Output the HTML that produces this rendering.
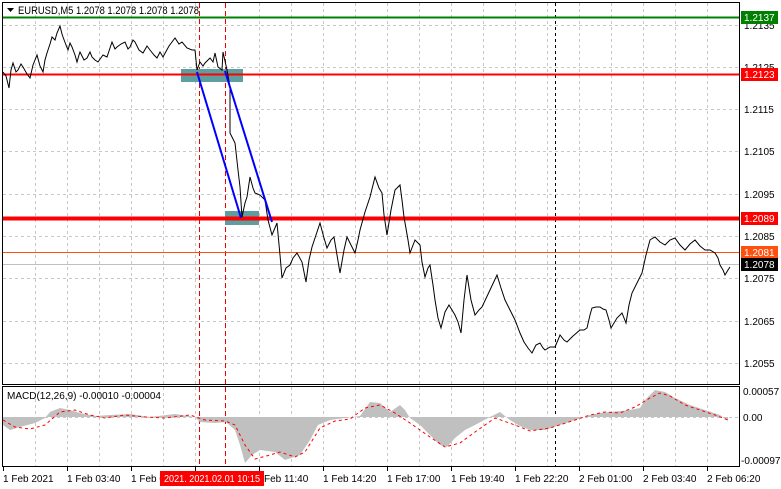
<!DOCTYPE html>
<html><head><meta charset="utf-8"><style>
body{margin:0;background:#fff;width:781px;height:489px;overflow:hidden}
svg{display:block;font-family:"Liberation Sans",sans-serif}
</style></head><body>
<svg width="781" height="489" viewBox="0 0 781 489" xmlns="http://www.w3.org/2000/svg">
<rect width="781" height="489" fill="#fff"/>
<g stroke="#c8c8c8" stroke-dasharray="3,3" stroke-width="1">
<path d="M35.5 3V384M67.5 3V384M99.5 3V384M131.5 3V384M163.5 3V384M195.5 3V384M259.5 3V384M291.5 3V384M323.5 3V384M355.5 3V384M387.5 3V384M419.5 3V384M451.5 3V384M483.5 3V384M515.5 3V384M547.5 3V384M579.5 3V384M611.5 3V384M643.5 3V384M675.5 3V384M707.5 3V384"/>
<path d="M35.5 387V466M67.5 387V466M99.5 387V466M131.5 387V466M163.5 387V466M195.5 387V466M259.5 387V466M291.5 387V466M323.5 387V466M355.5 387V466M387.5 387V466M419.5 387V466M451.5 387V466M483.5 387V466M515.5 387V466M547.5 387V466M579.5 387V466M611.5 387V466M643.5 387V466M675.5 387V466M707.5 387V466"/>
<path d="M3 25.5H740M3 67.5H740M3 109.5H740M3 151.5H740M3 194.5H740M3 236.5H740M3 278.5H740M3 321.5H740M3 363.5H740M3 417.5H740"/>
</g>
<path d="M555.5 3V384M555.5 387V466" stroke="#000" stroke-dasharray="3,3"/>
<path d="M199.5 3V384M199.5 387V466M225.5 3V384M225.5 387V466" stroke="#e00" stroke-dasharray="5,3"/>
<path d="M3 17.5H740" stroke="#008000" stroke-width="2"/>
<path d="M3 252.5H740" stroke="#ff5010" stroke-width="1"/>
<path d="M3 264.5H740" stroke="#c0c0c0" stroke-width="1"/>
<rect x="181" y="69" width="62" height="13" fill="#5f9ea0"/>
<rect x="225" y="211" width="34" height="14" fill="#5f9ea0"/>
<path d="M3 74.5H740" stroke="#f00" stroke-width="2"/>
<path d="M3 218.5H740" stroke="#f00" stroke-width="4"/>
<polyline fill="none" stroke="#000" stroke-width="1" points="3,72 6,76 9,88 11,70 13,63 16,72 18,70 21,64 23,67 27,74 30,78 33,65 37,55 40,66 43,72 45,60 47,53 50,44 52,37 55,40 57,33 60,26 62,34 63,37 66,45 68,50 70,43 72,47 75,55 77,62 79,55 80,52 84,60 87,58 90,52 92,57 95,60 98,62 103,55 107,57 110,48 112,42 115,49 117,47 121,44 125,42 128,49 130,47 133,40 135,42 139,50 143,53 147,46 150,50 154,55 157,58 160,52 163,57 169,46 175,38 179,44 182,42 187,48 192,50 195,50 197,70 200,62 203,66 205,63 208,60 210,58 213,62 215,53 218,67 222,70 223,52 227,70 230,87 230,133 235,143 238,170 240,187 242,217 245,203 247,197 250,177 253,188 255,193 260,195 265,200 268,220 272,235 277,223 280,255 282,278 286,268 290,265 293,258 297,253 302,262 306,282 309,260 312,247 316,235 320,223 324,238 327,248 331,240 334,237 337,255 340,273 344,250 347,237 351,245 355,253 358,240 360,230 365,212 370,197 373,185 375,177 379,188 382,193 384,215 387,235 391,210 395,190 400,185 402,200 404,217 408,240 410,253 415,240 420,245 422,262 425,277 428,268 430,265 433,285 435,300 438,318 441,328 445,312 449,305 452,310 455,315 458,322 461,333 464,300 467,275 471,300 475,315 479,310 482,307 490,290 497,275 501,288 505,300 510,310 515,320 520,333 524,342 528,348 532,353 536,345 540,343 543,348 545,350 550,347 555,347 558,340 560,335 564,340 567,342 573,336 580,330 584,330 587,328 590,315 592,308 596,307 600,307 603,309 606,310 609,320 611,328 617,318 622,313 624,318 626,323 629,305 632,293 637,283 642,273 646,255 650,240 653,238 655,237 660,242 665,245 670,240 675,238 680,245 685,250 690,244 695,240 700,246 705,250 710,250 715,253 718,258 720,265 723,270 725,275 728,270 730,267"/>
<path d="M197 72L241 218M225 71L272 222" stroke="#0000ff" stroke-width="2"/>
<rect x="2.5" y="2.5" width="737" height="382" fill="none" stroke="#000"/>
<rect x="2.5" y="386.5" width="737" height="80" fill="none" stroke="#000"/>
<path d="M7 8h7l-3.5 4z" fill="#000"/>
<text x="18" y="14" font-size="11" fill="#000" textLength="181" lengthAdjust="spacingAndGlyphs">EURUSD,M5  1.2078 1.2078 1.2078 1.2078</text>
<polygon fill="#c0c0c0" points="3,417 3,425 10,430 20,427 35,423 45,418 50,412 60,408 70,410 80,413 95,416 110,415 130,414 150,417 175,414 195,417 200,422 215,423 226,422 235,430 240,445 245,463 252,455 260,450 275,452 285,460 300,455 310,440 318,425 330,420 345,418 360,416 370,402 380,403 390,412 400,405 405,410 410,418 420,425 430,435 440,445 447,447 455,438 465,430 475,425 490,417 500,412 510,420 520,426 530,430 545,430 560,425 575,420 590,415 600,413 610,412 620,411 630,410 640,408 645,400 650,395 655,390 665,392 675,398 690,405 705,410 720,415 728,421 728,417"/>
<polyline fill="none" stroke="#f00" stroke-dasharray="3,3" points="3,420 15,427 30,429 45,425 60,412 75,410 90,415 105,418 125,415 145,417 165,418 190,415 205,420 225,421 235,425 245,445 255,459 270,455 280,452 295,457 305,452 320,428 335,421 350,419 365,408 380,405 395,413 410,423 430,437 445,447 460,443 475,432 495,418 515,425 530,431 550,428 575,420 590,415 605,412 620,413 635,407 650,398 660,393 670,396 685,405 700,410 715,415 728,420"/>
<text x="7" y="399" font-size="10" fill="#000">MACD(12,26,9) -0.00010 -0.00004</text>
<g font-size="10" fill="#000">
<text x="744" y="29">1.2135</text><text x="744" y="71">1.2125</text><text x="744" y="113">1.2115</text><text x="744" y="155">1.2105</text><text x="744" y="198">1.2095</text><text x="744" y="240">1.2085</text><text x="744" y="282">1.2075</text><text x="744" y="325">1.2065</text><text x="744" y="367">1.2055</text>
<text x="743" y="395">0.00057</text><text x="743" y="421">0.00</text><text x="741" y="464">-0.00097</text>
</g>
<rect x="741" y="11" width="37" height="13" fill="#008000"/><text x="744" y="21" font-size="10" fill="#fff">1.2137</text>
<rect x="741" y="68" width="37" height="13" fill="#f00"/><text x="744" y="78" font-size="10" fill="#fff">1.2123</text>
<rect x="741" y="212" width="37" height="13" fill="#f00"/><text x="744" y="222" font-size="10" fill="#fff">1.2089</text>
<rect x="741" y="246" width="37" height="13" fill="#ff5010"/><text x="744" y="256" font-size="10" fill="#fff">1.2081</text>
<rect x="741" y="258" width="37" height="13" fill="#000"/><text x="744" y="268" font-size="10" fill="#fff">1.2078</text>
<g font-size="10" fill="#000">
<text x="3" y="482">1 Feb 2021</text><text x="67" y="482">1 Feb 03:40</text><text x="131" y="482">1 Feb 0</text><text x="264" y="482">Feb 11:40</text><text x="323" y="482">1 Feb 14:20</text><text x="387" y="482">1 Feb 17:00</text><text x="451" y="482">1 Feb 19:40</text><text x="515" y="482">1 Feb 22:20</text><text x="579" y="482">2 Feb 01:00</text><text x="643" y="482">2 Feb 03:40</text><text x="707" y="482">2 Feb 06:20</text>
</g>
<g stroke="#000"><path d="M3.5 467v4M67.5 467v4M131.5 467v4M195.5 467v4M259.5 467v4M323.5 467v4M387.5 467v4M451.5 467v4M515.5 467v4M579.5 467v4M643.5 467v4M707.5 467v4"/></g>
<rect x="160" y="471" width="104" height="15" fill="#f00"/>
<text x="164" y="482" font-size="10" fill="#fff" textLength="96" lengthAdjust="spacingAndGlyphs">2021. 2021.02.01 10:15</text>
</svg>
</body></html>
